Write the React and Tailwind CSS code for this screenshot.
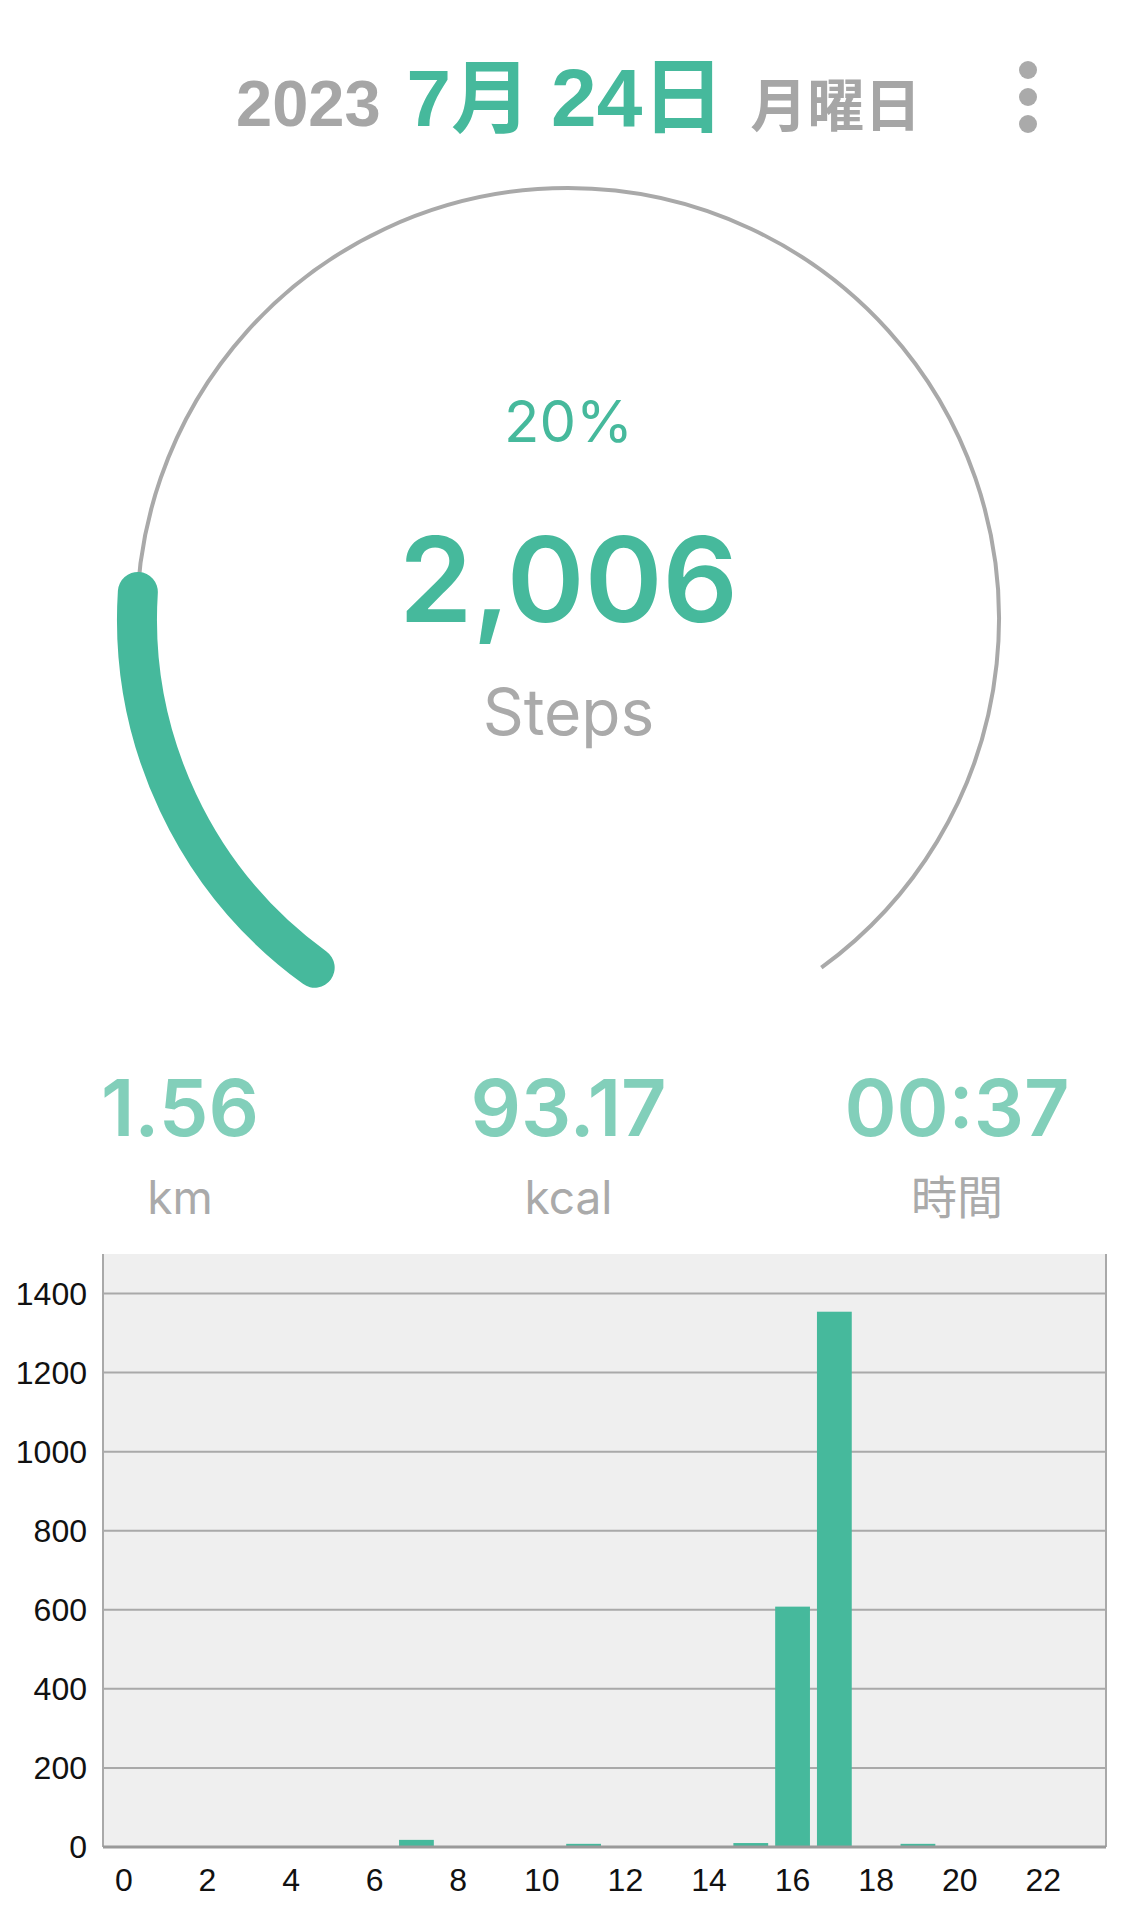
import React from "react";

const GREEN = "#46b99c";
const GRID = "#a9a9a9";

/* gauge geometry (section coords) */
const CX = 568;
const CY = 469;
const R = 431;
const START = 126; // deg, screen coords
const SPAN = 288;

function pt(deg) {
  const a = (deg * Math.PI) / 180;
  return [CX + R * Math.cos(a), CY + R * Math.sin(a)];
}

function Gauge({ pct }) {
  const [sx, sy] = pt(START);
  const [ex, ey] = pt(START + SPAN);
  const [gx, gy] = pt(START + SPAN * pct);
  const large = SPAN * pct > 180 ? 1 : 0;
  return (
    <svg className="absolute inset-0" width="1137" height="850" viewBox="0 0 1137 850">
      <path d={`M ${sx} ${sy} A ${R} ${R} 0 1 1 ${ex} ${ey}`} fill="none" stroke={GRID} strokeWidth="4" />
      <path d={`M ${sx} ${sy} A ${R} ${R} 0 ${large} 1 ${gx} ${gy}`} fill="none" stroke={GREEN} strokeWidth="40" strokeLinecap="round" />
    </svg>
  );
}

/* hourly steps */
const HOURS = Array.from({ length: 24 }, (_, h) => ({ 7: 18, 11: 8, 15: 10, 16: 608, 17: 1354, 19: 8 }[h] || 0));

function Chart() {
  const left = 103;
  const right = 1106;
  const top = 24;
  const zero = 617;
  const unit = (zero - top) / 7.5; // px per 200 steps
  const slot = (right - left) / 24;
  const ticks = [200, 400, 600, 800, 1000, 1200, 1400];
  return (
    <svg width="1137" height="690" viewBox="0 0 1137 690" className="block">
      <rect x={left} y={top} width={right - left} height={zero - top} fill="#efefef" />
      {ticks.map((v) => {
        const y = zero - (v / 200) * unit;
        return <line key={v} x1={left} x2={right} y1={y} y2={y} stroke={GRID} strokeWidth="2" />;
      })}
      {HOURS.map((v, h) => {
        if (!v) return null;
        const hgt = (v / 200) * unit;
        return <rect key={h} x={left + slot * h + 3.5} y={zero - hgt} width={slot - 7} height={hgt} fill={GREEN} />;
      })}
      <line x1={left} x2={left} y1={top} y2={zero} stroke={GRID} strokeWidth="2" />
      <line x1={right} x2={right} y1={top} y2={zero} stroke={GRID} strokeWidth="2" />
      <line x1={left} x2={right} y1={zero} y2={zero} stroke="#9a9a9a" strokeWidth="3" />
      {[0, ...ticks].map((v) => (
        <text key={v} x="87" y={zero - (v / 200) * unit + 11} textAnchor="end" fontSize="32" fill="#111" fontFamily="Liberation Sans, sans-serif">
          {v}
        </text>
      ))}
      {Array.from({ length: 12 }, (_, i) => i * 2).map((h) => (
        <text key={h} x={left + slot * h + slot / 2} y="661" textAnchor="middle" fontSize="32" fill="#111" fontFamily="Liberation Sans, sans-serif">
          {h}
        </text>
      ))}
    </svg>
  );
}

function Stat({ value, label }) {
  return (
    <div className="w-[240px] flex flex-col items-center">
      <div className="text-[79px] leading-none font-semibold text-[#82cfba] font-['Inter',sans-serif]">{value}</div>
      <div className="mt-[27px] text-[46px] leading-none text-[#aaaaaa] font-['Inter','Noto_Sans_CJK_JP',sans-serif]">{label}</div>
    </div>
  );
}

export default function App() {
  return (
    <div className="w-[1137px] h-[1920px] bg-white overflow-hidden">
      {/* header */}
      <div className="h-[150px] flex items-start pt-[57px] pl-[236px] pr-[100px]">
        <div className="flex items-baseline font-bold font-['Liberation_Sans','Noto_Sans_CJK_JP',sans-serif]">
          <span className="text-[65px] leading-none text-[#a6a6a6]">2023</span>
          <span className="ml-[26px] text-[80px] leading-none text-[#46b99c]">7月</span>
          <span className="ml-[20px] text-[82px] leading-none text-[#46b99c]">24日</span>
          <span className="ml-[26px] text-[57px] leading-none text-[#a6a6a6]">月曜日</span>
        </div>
        <div className="ml-auto mt-[4px] flex flex-col gap-[9px]">
          <span className="w-[18px] h-[18px] rounded-full bg-[#aaaaaa]" />
          <span className="w-[18px] h-[18px] rounded-full bg-[#aaaaaa]" />
          <span className="w-[18px] h-[18px] rounded-full bg-[#aaaaaa]" />
        </div>
      </div>

      {/* gauge */}
      <div className="relative h-[850px]">
        <Gauge pct={0.2} />
        <div className="relative flex flex-col items-center pt-[242px] font-['Inter',sans-serif]">
          <div className="text-[58px] leading-none text-[#46b99c]">20%</div>
          <div className="mt-[70px] text-[118px] leading-none font-semibold text-[#46b99c]">2,006</div>
          <div className="mt-[42px] text-[64px] leading-none text-[#aaaaaa]">Steps</div>
        </div>
      </div>

      {/* stats */}
      <div className="h-[230px] pt-[68px] px-[60px] flex justify-between">
        <Stat value="1.56" label="km" />
        <Stat value="93.17" label="kcal" />
        <Stat value="00:37" label="時間" />
      </div>

      {/* hourly chart */}
      <Chart />
    </div>
  );
}
